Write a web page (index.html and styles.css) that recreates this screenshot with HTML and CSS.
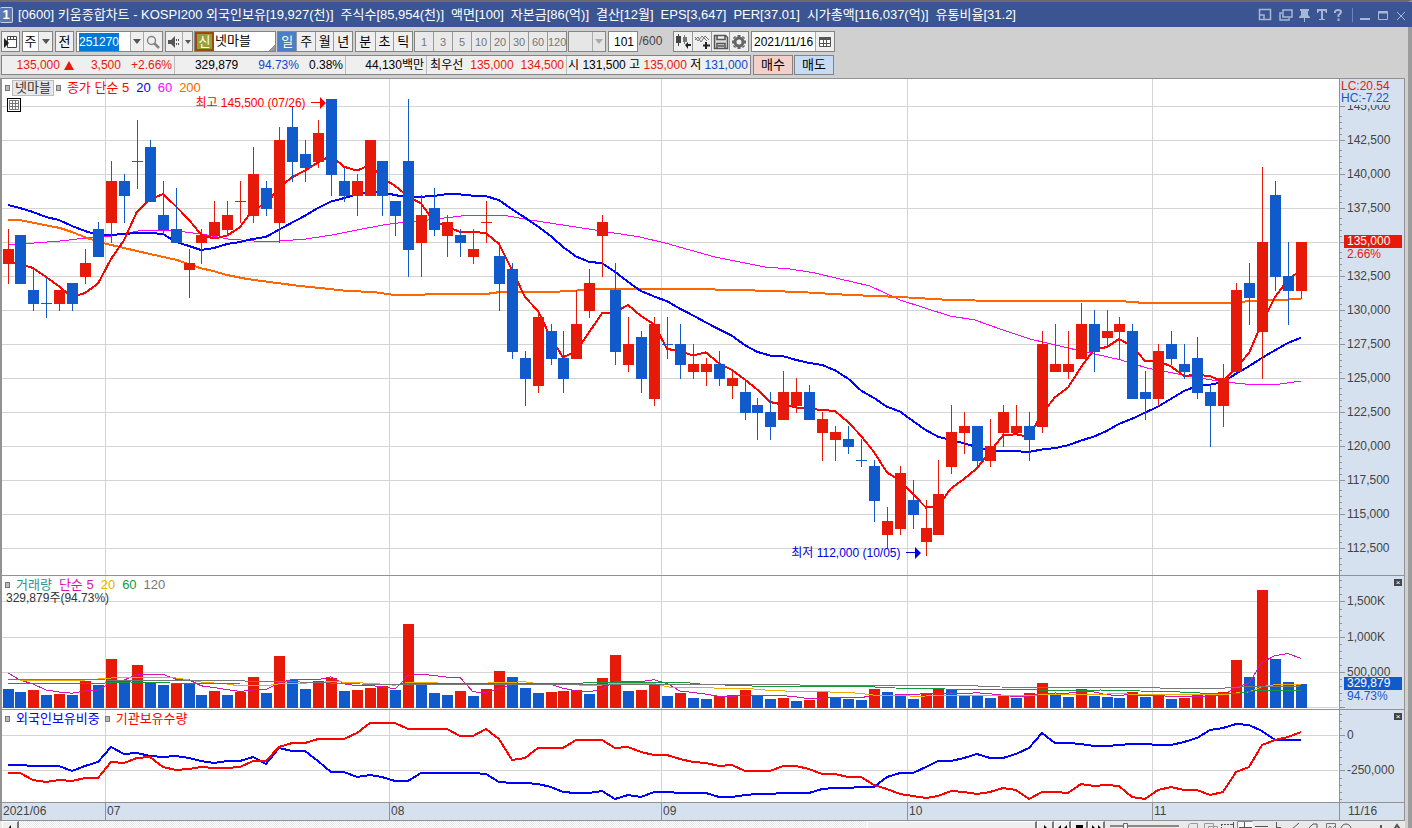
FILE: index.html
```html
<!DOCTYPE html>
<html lang="ko">
<head>
<meta charset="utf-8">
<title>[0600] 키움종합차트</title>
<link rel="stylesheet" href="styles.css">
</head>
<body>
<div class="window">
  <header class="titlebar">
    <span class="win-no">1</span>
    <h1 class="title">
      <span>[0600] 키움종합차트 - KOSPI200 외국인보유[19,927(천)]</span>
      <span>주식수[85,954(천)]</span>
      <span>액면[100]</span>
      <span>자본금[86(억)]</span>
      <span>결산[12월]</span>
      <span>EPS[3,647]</span>
      <span>PER[37.01]</span>
      <span>시가총액[116,037(억)]</span>
      <span>유통비율[31.2]</span>
    </h1>
    <svg class="win-icons" width="150" height="22" viewBox="1257 3 150 22" fill="none" stroke="#a9b7d6">
      <path stroke-width="1.5" d="M1258.5 8.500h11v10h-11zM1258 14h5v5M1282 9h9v7h-9z"/>
      <path stroke-width="1.500" d="M1281 12h-2v7h9v-2"/>
      <path fill="#a9b7d6" stroke="none" d="M1299 8h9v2h-1v4l2 2v1h-5v4h-1v-4h-5v-1l2-2v-4h-1zM1316 8h10v4h-1l-1-2h-2v8h2v1h-6v-1h2v-8h-2l-1 2h-1z"/>
      <path stroke-width="2" d="M1334 12V10.500Q1335 9 1337 9Q1340 9 1340 11Q1340 12.500 1337.500 14V16M1337.500 17.500V20"/>
      <path stroke="#6f86b6" d="M1351.500 7v14"/>
      <path stroke-width="2" d="M1359 18h10M1377 11.500h10"/>
      <path d="M1377.500 10.500h9v8h-9zM1396 11l8 8M1404 11l-8 8"/>
    </svg>
  </header>

  <div class="toolbar">
    <button class="btn" aria-label="종목 목록"><svg width="14" height="14"><path fill="#fff" stroke="#444" d="M3.500 1.500h9v11h-9zM6.500 1.500v3M9.500 1.500v3M3.500 4.500h9"/><path fill="#222" d="M0 3l5 5-5 5z"/></svg></button>
    <span class="combo combo-kind"><button class="face">주</button><button class="arrow" aria-label="구분 선택"></button></span>
    <button class="btn">전</button>
    <span class="combo combo-code"><input value="251270" aria-label="종목코드" class="code"><button class="arrow" aria-label="최근 종목"></button><button class="face icon" aria-label="종목 검색"><svg width="14" height="14" fill="none" stroke="#858585"><circle cx="5.500" cy="5.500" r="4" stroke-width="1.500"/><path stroke-width="2.500" d="M8 8l5 5"/></svg></button></span>
    <span class="combo combo-sound"><button class="face icon" aria-label="소리"><svg width="14" height="14"><path fill="#555" d="M1 5h3l4-4v12l-4-4h-3zM9 4h1v2h-1zM9 8h1v2h-1zM11 4h1v2h-1zM11 8h1v2h-1z"/></svg></button><button class="arrow" aria-label="소리 설정"></button></span>
    <span class="stock"><b class="credit">신</b><span>넷마블</span></span>
    <span class="group periods"><button class="on">일</button><button>주</button><button>월</button><button>년</button></span>
    <span class="group units"><button>분</button><button>초</button><button>틱</button></span>
    <span class="group counts"><button disabled>1</button><button disabled>3</button><button disabled>5</button><button disabled>10</button><button disabled>20</button><button disabled>30</button><button disabled>60</button><button disabled>120</button></span>
    <span class="combo combo-off"><button class="face" disabled aria-label="주기"></button><button class="arrow" disabled aria-label="주기 선택"></button></span>
    <label class="bars"><input value="101" aria-label="표시 개수"><span>/600</span></label>
    <span class="group tools">
      <button aria-label="차트 유형"><svg width="16" height="16"><path fill="#444" d="M1 2h5v7h-5zM3 0h1v12h-1z"/><path fill="#777" d="M8 3h4v5h-4zM9 1h1v9h-1z"/><path fill="#222" d="M10 11l3-3v2h3v2h-3v3z"/></svg></button>
      <button aria-label="지표 추가"><svg width="16" height="16"><path fill="none" stroke="#777" d="M1 6l3-3 3 5 4-6 4 4M1 3l3 4 4-5 5 5"/><path stroke="#222" stroke-width="2" d="M12 8v7M9 11.500h7"/></svg></button>
      <button aria-label="저장"><svg width="16" height="16"><path fill="#ddd" stroke="#555" stroke-width="1.500" d="M1.500 1.500h11l2 2v11h-13zM4 1.500v4h8v-4M4 14.500v-5h8v5M5 12h6"/></svg></button>
      <button aria-label="설정"><svg width="16" height="16"><circle cx="8" cy="8" r="4" fill="none" stroke="#666" stroke-width="3"/><path stroke="#666" stroke-width="3" d="M8 1v2M8 13v2M1 8h2M13 8h2M3 3l1 1M12 12l1 1M3 13l1-1M12 4l1-1"/><circle cx="8" cy="8" r="2" fill="#eee"/></svg></button>
    </span>
    <span class="combo combo-date"><input value="2021/11/16" aria-label="기준일"><button class="face icon" aria-label="달력"><svg width="12" height="12"><path fill="#fff" stroke="#555" d="M.5 1.500h11v9h-11zM.5 7.500h11M4.500 4v6M7.500 4v6"/><path fill="#555" d="M0 1h12v3h-12z"/></svg></button></span>
  </div>

  <div class="quote">
    <div class="cells">
      <div class="cell c1 up"><span>135,000</span><i class="tri"></i><span>3,500</span><span>+2.66%</span></div>
      <div class="cell c2"><span>329,879</span><span class="down">94.73%</span><span>0.38%</span></div>
      <div class="cell c3"><span>44,130백만</span></div>
      <div class="cell c4"><span>최우선</span><span class="up">135,000</span><span class="up">134,500</span></div>
      <div class="cell c5"><span>시</span><span>131,500</span><span>고</span><span class="up">135,000</span><span>저</span><span class="down">131,000</span></div>
    </div>
    <button class="trade buy">매수</button>
    <button class="trade sell">매도</button>
  </div>

  <main class="chart">
    <section class="pane price">
      <div class="plot">
        <svg id="price-plot" class="canvas" viewBox="2 79 1337 496" preserveAspectRatio="none"></svg>
        <div class="legend">
          <i class="mark"></i><span class="tag">넷마블</span><i class="mark"></i>
          <span class="l-red">종가 단순 5</span><span class="l-blue">20</span><span class="l-pink">60</span><span class="l-orange">200</span>
        </div>
        <button class="grid-btn" aria-label="데이터 표"><svg width="10" height="10"><path fill="#fff" stroke="#777" d="M.5.5h9v9h-9zM.5 3.500h9M.5 6.500h9M3.500.5v9M6.500.5v9"/></svg></button>
        <div class="note high"><span>최고 145,500 (07/26)</span><svg width="15" height="12"><path fill="currentColor" d="M0 5h9V0l6 6-6 6V6H0z"/></svg></div>
        <div class="note low"><span>최저 112,000 (10/05)</span><svg width="15" height="12"><path fill="currentColor" d="M0 5h9V0l6 6-6 6V6H0z"/></svg></div>
      </div>
      <div class="axis">
        <svg id="price-axis" width="65" height="496" viewBox="1339 79 65 496"></svg>
        <div class="rates"><span class="up">LC:20.54</span><span class="hc">HC:-7.22</span></div>
        <div class="now now-price"><b>135,000</b><span>2.66%</span></div>
      </div>
    </section>
    <section class="pane volume">
      <div class="plot">
        <svg id="volume-plot" class="canvas" viewBox="2 576 1337 133" preserveAspectRatio="none"></svg>
        <div class="legend">
          <i class="mark"></i><span class="l-teal">거래량</span><span class="l-magenta">단순 5</span><span class="l-gold">20</span><span class="l-green">60</span><span class="l-gray">120</span>
        </div>
        <div class="vol-now">329,879주(94.73%)</div>
      </div>
      <div class="axis">
        <svg id="volume-axis" width="65" height="133" viewBox="1339 576 65 133"></svg>
        <button class="close" aria-label="거래량 닫기"></button>
        <div class="now now-volume"><b>329,879</b><span>94.73%</span></div>
      </div>
    </section>
    <section class="pane holding">
      <div class="plot">
        <svg id="holding-plot" class="canvas" viewBox="2 710 1337 92" preserveAspectRatio="none"></svg>
        <div class="legend"><i class="mark"></i><span class="l-blue">외국인보유비중</span><i class="mark"></i><span class="l-red">기관보유수량</span></div>
      </div>
      <div class="axis">
        <svg id="holding-axis" width="65" height="92" viewBox="1339 710 65 92"></svg>
        <button class="close" aria-label="보유 닫기"></button>
      </div>
    </section>
    <div class="dates">
      <div class="months"><span>2021/06</span><span>07</span><span>08</span><span>09</span><span>10</span><span>11</span></div>
      <div class="today">11/16</div>
    </div>
  </main>

  <footer class="bottom">
    <button class="sb left" aria-label="왼쪽으로"><svg width="14" height="14"><path d="M8 2v10L4 7z"/></svg></button>
    <div class="track"><div class="thumb"></div></div>
    <button class="sb" aria-label="오른쪽으로"><svg width="14" height="14"><path d="M6 2v10l5-5z"/></svg></button>
    <button class="sb" aria-label="처음"><svg width="14" height="14"><path d="M6 2v8L2 6zM12 2v8L8 6z"/></svg></button>
    <button class="sb" aria-label="정지"><svg width="14" height="14"><path d="M4 2h7v7H4z"/></svg></button>
    <button class="sb" aria-label="끝"><svg width="14" height="14"><path d="M3 2v8l4-4zM9 2v8l4-4z"/></svg></button>
    <svg class="draw-tools" width="300" height="20" viewBox="1104 821 300 20" fill="none" stroke="#555">
      <path stroke="#888" stroke-width="2" d="M1109 826h69"/><path fill="#eee" stroke="#666" d="M1122.500 823.500h4v10h-4z"/>
      <path stroke="#999" d="M1187.500 835v-10l2-1.500h7v11M1203.500 823.500h9v8h-9zM1207.500 826.500h9v8h-9z"/>
      <path stroke-dasharray="2 1" d="M1220 824.500h10M1220.500 824v10"/><path d="M1232.500 822v8M1229 824.500h4"/>
      <path fill="#f8f8f8" stroke="none" d="M1236 821h16v12h-16z"/><path stroke="#888" d="M1236.500 833v-11.500h15"/>
      <path d="M1238 827.500h13M1243.500 822v10M1254 826.500h13M1259 829.500h8M1275.500 822v10M1275 827.500h5M1290 830l8-7M1306 830l6-6h4v5"/>
      <path stroke="#777" d="M1325.500 823.500h9v9h-9zM1326 830l3-4 2 3 3-3"/><circle cx="1345" cy="829" r="5"/><path stroke-width="2" d="M1380 825v8M1392 831l4-6 4 6"/>
    </svg>
  </footer>
</div>
<script src="chart.js"></script>
</body>
</html>
```
FILE: styles.css
```css
* { box-sizing: border-box; }
body {
  margin: 0;
  height: 100vh;
  overflow: hidden;
  background: #d0d0d0;
  color: #000;
  font: 13px/18px "Liberation Sans", "Noto Sans CJK KR", sans-serif;
}
button, input {
  font: inherit;
  color: inherit;
  margin: 0;
  padding: 0;
  border: 0;
  border-radius: 0;
  min-width: 0;
}
input { font-size: 12px; outline: 0; }
svg { display: block; flex: none; }
.window { border-top: 2px solid #6c6c6c; border-right: 4px solid #9c9c9c; }

.titlebar {
  display: flex;
  align-items: center;
  height: 25px;
  margin-right: -4px;
  padding-right: 4px;
  background: #3a5592;
  color: #fff;
}
.win-no {
  width: 13px;
  height: 16px;
  border: 1px solid #c8d2e8;
  border-left: 0;
  border-radius: 2px;
  background: #5c77b4;
  font-weight: bold;
  line-height: 14px;
  text-align: center;
}
.title {
  flex: 1;
  display: flex;
  gap: 7px;
  margin: 0 0 0 5px;
  font-size: 13px;
  font-weight: normal;
  white-space: nowrap;
}

.toolbar {
  display: flex;
  gap: 2px;
  height: 26px;
  margin-top: 4px;
  padding-left: 1px;
  white-space: nowrap;
}
.toolbar > * { height: 21px; flex: none; }
.btn, .combo, .group, .stock {
  border: 1px solid #848484;
  background: #efefef;
}
.btn { width: 19px; display: flex; align-items: center; justify-content: center; }
.combo, .group, .stock, .bars { display: flex; align-items: stretch; }
.face { flex: 1; background: #fff; }
.icon { flex: none; width: 19px; display: flex; align-items: center; justify-content: center; background: #efefef; border-left: 1px solid #aaa; }
.arrow { width: 13px; background: #efefef; border-left: 1px solid #aaa; display: flex; align-items: center; justify-content: center; }
.arrow::after { content: ""; border: 4px solid transparent; border-top: 5px solid #555; border-bottom: 0; }
.combo-kind { width: 31px; }
.combo-kind .arrow { width: 14px; }
.combo-code { width: 87px; }
.combo-code .code { flex: 1; width: 20px; padding-left: 2px; }
.code::selection { background: #0078d7; color: #fff; }
.combo-sound { width: 28px; }
.combo-sound .icon { flex: 1; border-left: 0; }
.combo-sound .arrow { width: 10px; }
.combo-sound .arrow::after { border-width: 4px 3px 0; }
.stock { width: 82px; margin-left: -1px; background: linear-gradient(135deg, #fff 93%, #999 93%); }
.credit { width: 19px; margin-right: 1px; border: 2px solid #9a4a0c; background: #95a03c; color: #fff; font-weight: normal; text-align: center; line-height: 15px; }
.group button { width: 19px; background: #efefef; border-left: 1px solid #999; }
.group button:first-child { border-left: 0; }
.periods { margin-left: -1px; width: 76px; }
.group .on { background: #4a7fc8; color: #fff; }
.units { width: 58px; }
.counts { width: 153px; margin-left: -1px; }
.counts button { flex: 1; font-size: 11px; }
.counts button:disabled { color: #777; background: #e9e9e9; }
.combo-off { width: 38px; margin-left: -1px; }
.combo-off button { background: #e6e6e6; }
.combo-off .arrow::after { border-top-color: #aaa; }
.bars input { width: 30px; padding-right: 3px; border: 1px solid #848484; background: #fff; text-align: right; }
.bars span { width: 33px; padding-left: 1px; color: #444; font-size: 12px; line-height: 20px; }
.tools { width: 76px; }
.tools button { display: flex; align-items: center; justify-content: center; }
.combo-date { width: 84px; }
.combo-date input { flex: 1; width: 40px; padding-left: 2px; }

.quote { display: flex; gap: 2px; height: 20px; margin-top: -2px; padding-left: 1px; }
.cells { display: flex; border: 1px solid #848484; background: #efefef; font-size: 12px; }
.cell { display: flex; justify-content: flex-end; align-items: center; padding-right: 2px; border-left: 1px solid #bbb; white-space: nowrap; }
.cell:first-child { border-left: 0; }
.c1 { width: 172px; gap: 10px; }
.c2 { width: 171px; gap: 10px; }
.c2 span:first-child { margin-right: 10px; }
.c3 { width: 81px; }
.c4 { width: 140px; gap: 7px; }
.c5 { width: 184px; justify-content: space-between; padding-left: 1px; }
.tri { margin: 0 7px 0 -6px; border: 5px solid transparent; border-top: 0; border-bottom: 9px solid #e71a0a; }
.up { color: #e71a0a; }
.down { color: #1446c8; }
.trade { width: 40px; border: 1px solid #848484; }
.buy { background: #f4d0ca; }
.sell { background: #c5dcf4; margin-left: -1px; }

.chart { margin-top: 3px; margin-right: 3px; border: 1px solid #929292; border-left-width: 2px; background: #fff; font-size: 12px; }
.pane { display: flex; border-bottom: 1px solid #929292; }
.plot { flex: 1; min-width: 0; position: relative; }
.canvas { width: 100%; shape-rendering: crispEdges; }
.price .canvas { height: 496px; }
.volume .canvas { height: 133px; }
.holding .canvas { height: 92px; }
.axis { position: relative; width: 65px; background: #d6e1ef; border-left: 1px solid #929292; }
.axis svg { margin-left: -1px; shape-rendering: crispEdges; }
.axis text { fill: #444; font-size: 12px; }
.legend { position: absolute; top: 0; left: 3px; display: flex; align-items: center; gap: 7px; font-size: 13px; white-space: nowrap; }
.legend .mark { width: 5px; height: 6px; margin-right: -1px; border: 1px solid #777; background: #bbb; }
.legend .tag { margin-left: -4px; }
.legend .tag + .mark { margin-left: -5px; }
.tag { padding: 0 2px; border: 1px solid #bbb; background: #e8e8e8; line-height: 14px; color: #333; }
.l-red { color: #f00; }
.l-blue { color: #00f; }
.l-pink { color: #f0f; }
.l-orange { color: #f60; }
.l-teal { color: #339090; }
.l-magenta { color: #d614b4; }
.l-gold { color: #eaae00; }
.l-green { color: #149a3c; }
.l-gray { color: #777; }
.holding .mark + .l-blue + .mark { margin-left: -2px; }
.grid-btn { position: absolute; top: 19px; left: 5px; width: 14px; height: 14px; padding: 1px; border: 1px solid #000; background: #fff; }
.note { position: absolute; display: flex; align-items: center; gap: 5px; white-space: nowrap; }
.high { right: 75.8%; top: 15px; color: #f00; }
.low { right: 31.3%; top: 465px; color: #00d; }
.rates { position: absolute; top: 1px; left: 0; right: 0; height: 25px; display: flex; flex-direction: column; padding-left: 1px; background: #d6e1ef; line-height: 12px; }
.hc { color: #115acb; }
.now { position: absolute; left: 4px; right: 2px; display: flex; flex-direction: column; line-height: 12px; }
.now b { padding-left: 3px; height: 13px; color: #fff; font-weight: normal; }
.now span { padding-left: 3px; }
.now-price { top: 156px; color: #e71a0a; }
.now-price b { background: #e71a0a; }
.now-volume { top: 101px; color: #115acb; }
.now-volume b { background: #115acb; }
.vol-now { position: absolute; top: 13px; left: 4px; color: #333; }
.close { position: absolute; top: 3px; right: 2px; width: 8px; height: 7px; background: #444; }
.close::after { content: "×"; display: block; color: #fff; font-size: 8px; line-height: 7px; text-align: center; }
.dates { display: flex; height: 17px; background: #d6e1ef; color: #444; line-height: 16px; }
.months { flex: 1; display: grid; grid-template-columns: 103fr 284fr 272fr 246fr 245fr 187fr; }
.months span { padding-left: 1px; border-left: 1px solid #929292; }
.months span:first-child { border-left: 0; }
.today { width: 65px; padding-left: 8px; border-left: 1px solid #929292; }

.bottom { display: flex; padding-left: 2px; margin-right: 3px; background: #e9e9e9; }
.sb { width: 17px; height: 18px; border: 1px solid #fff; border-right: 2px solid #777; border-bottom: 2px solid #777; background: #efefef; }
.track { flex: 1; display: flex; justify-content: flex-end; background: repeating-conic-gradient(#fff 0 25%, #e6e6e6 0 50%) 0 0 / 2px 2px; }
.thumb { width: 170px; border: 1px solid #fff; border-right: 2px solid #777; background: #efefef; }
```
FILE: chart.js
```js
const STEP = 12.93, FIRST = 8;
const UP = '#e71a0a', DOWN = '#115acb';
const cx = i => Math.floor(FIRST + STEP * i);

/* colour, high, body top, body bottom, low */
const candles = `R229,249,264,284 B235,235,284,284 B268,290,304,311 B277,303,304,318 R290,290,304,311 B283,283,304,311
R249,263,277,284 B222,229,257,257 R161,181,223,243 B174,181,196,223 R120,161,162,189 B140,147,202,202
B181,215,230,234 B188,229,243,243 R249,263,270,298 R229,235,243,264 R201,222,236,236 R201,215,230,236
R181,201,202,223 R147,174,216,223 B181,188,209,216 R127,140,223,243 B107,127,162,182 B140,154,168,182
R120,133,162,168 B99,99,175,196 B167,181,196,202 R174,181,196,216 R140,140,196,196 B161,161,196,216
B201,201,216,236 B99,161,250,277 R195,215,243,277 B188,208,230,236 R215,222,236,257 B229,235,243,257
R229,249,257,264 R201,222,223,243 B242,256,284,311 B263,269,352,359 B351,358,379,406 R312,317,386,393
B324,331,359,365 B331,358,379,393 R290,324,359,359 R269,283,311,318 R215,222,236,277 B263,290,352,365
R317,344,365,372 B331,337,379,393 R317,324,399,406 B317,344,345,359 B324,344,365,379 R344,364,372,379
R358,364,372,386 B351,364,379,386 R370,378,386,399 B379,392,413,420 B398,405,413,440 B392,412,427,440
R371,392,420,420 R378,392,406,413 B385,392,420,420 R412,419,433,461 R426,432,440,461 B426,439,447,454
B439,460,461,467 B460,466,501,522 R507,521,535,548 R466,473,529,535 B480,500,515,529 R500,528,542,556
R460,494,535,535 R405,432,467,474 R412,426,433,454 B426,426,461,467 R419,446,461,467 R405,412,433,447
R405,426,433,433 B412,426,440,461 R331,344,427,433 R324,364,372,372 R331,364,372,379 R303,324,359,359
B310,324,352,372 R310,331,338,345 R317,324,332,359 B324,331,399,399 B371,392,399,420 R344,351,399,406
B331,344,359,365 B344,364,372,379 B337,358,393,399 B385,392,406,447 R364,378,406,427 R283,290,372,372
B263,283,298,325 R167,242,332,379 B181,195,277,291 B242,276,291,325 R242,242,291,299`
  .split(/\s+/).map(s => [s[0], ...s.slice(1).split(',').map(Number)]);

const volumes = [689,692,690,695,694,695,681,685,659,681,665,682,685,683,684,695,691,695,692,677,693,656,680,689,681,678,691,690,688,686,690,624,
684,693,695,691,696,689,671,677,688,693,692,691,690,694,678,655,691,690,685,696,693,698,699,696,695,690,696,699,698,701,700,692,697,699,700,689,
692,694,699,693,689,690,696,696,698,696,698,693,683,695,697,689,696,697,698,692,697,695,699,698,694,693,692,660,677,590,659,682,684];

const foreign = [765,765,766,766,766,771,766,762,747,754,753,756,757,756,758,761,763,761,761,757,764,748,751,751,761,772,772,777,775,777,781,781,
773,773,773,773,773,774,782,783,783,784,787,792,793,793,791,799,795,797,792,792,793,793,793,797,797,795,794,794,793,793,793,789,788,788,787,787,
777,773,773,767,761,761,758,754,758,758,754,748,733,743,743,744,746,746,745,744,744,745,745,742,738,730,728,724,725,731,740,740,740];
const institution = [773,773,780,782,780,781,778,778,762,763,758,757,767,770,769,767,768,768,767,761,761,747,743,743,739,739,739,733,723,723,723,729,
729,729,729,736,736,729,739,760,758,748,748,748,740,740,740,748,747,752,755,755,759,762,763,766,765,771,771,771,766,766,769,774,774,777,777,785,
789,794,796,798,796,791,792,794,792,788,790,799,792,792,793,784,786,785,786,797,799,790,787,790,790,795,792,772,767,745,740,737,732];

const line = (pts, color, w) =>
  `<polyline fill="none" stroke="${color}" stroke-width="${w}" points="${pts.map(p => p.join(',')).join(' ')}"/>`;
const series = ys => ys.map((y, i) => [cx(i), y]);
const rect = (x, y, w, h, c) => `<rect x="${x}" y="${y}" width="${w}" height="${h}" fill="${c}"/>`;
/* moving average; `seed` holds the values that precede a full window */
const average = (v, n, seed) => v.map((_, i) =>
  i < seed.length ? seed[i] : v.slice(i - n + 1, i + 1).reduce((a, b) => a + b, 0) / n);
const pairs = s => s.split(' ').map(p => p.split(',').map(Number));

const MONTHS = [105, 389, 661, 907, 1152];
const grid = (rows, top, h) =>
  rows.map(y => rect(2, y, 1336, 1, '#d4d4d4')).join('') + MONTHS.map(x => rect(x, top, 1, h, '#d4d4d4')).join('');
const put = (id, html) => { document.getElementById(id).innerHTML = html; };

const priceRows = Array.from({ length: 14 }, (_, k) => 106 + 34 * k);
const closes = candles.map(c => c[0] === 'R' ? c[2] : c[3]);
const ma5 = average(closes, 5, [262, 264, 268, 277]);
const ma20 = average(closes, 20, [205,208,212,217,220,226,231,235,235,234,233,233,234,242,246,250,248,244,242]);
const ma60 = pairs('8,245 34,243 60,241 86,238 112,236 138,231 152,230 176,231 202,234 228,239 254,241 280,241 306,239 332,235 357,230 383,225 405,222 420,221 444,218 470,215 503,215 530,220 556,224 582,228 608,232 640,237 665,243 690,250 715,257 740,262 765,267 790,269 815,273 840,279 870,286 900,300 925,308 950,316 975,320 1000,329 1030,339 1068,348 1095,354 1121,360 1147,368 1173,373 1199,378 1225,382 1245,384 1280,384 1301,381');
const ma200 = pairs('8,220 20,220 34,223 60,228 72,232 87,238 103,243 124,248 150,254 177,260 200,268 213,271 227,275 247,279 277,283 300,286 320,288 348,291 373,292 395,295 420,295 430,294 486,294 500,292 552,292 603,289 690,289 740,290 800,292 850,295 900,297 950,300 1000,301 1119,301 1145,303 1230,303 1250,301 1275,300 1301,299');

put('price-plot', grid(priceRows, 79, 496)
  + line(ma60, '#f0f', 1) + line(ma200, '#f60', 2) + line(series(ma20), '#00f', 2) + line(series(ma5), '#f00', 2)
  + candles.map(([k, hi, top, bot, lo], i) => {
    const c = k === 'R' ? UP : DOWN;
    return rect(cx(i), hi, 1, lo - hi, c) + rect(cx(i) - 5, top, 11, bot - top, c);
  }).join(''));

put('volume-plot', grid([601, 637, 672, 707], 576, 133)
  + volumes.map((y, i) => rect(cx(i) - 5, y, 11, 708 - y, i && y < volumes[i - 1] ? UP : DOWN)).join('')
  + line(series(average(volumes, 5, [673, 680, 684, 690])), '#d614b4', 1)
  + line(series(average(volumes, 20, [679,680,680,680,680,681,680,679,678,677,677,677,677,678,680,682,683,684,686])), '#eaae00', 1)
  + line(pairs('8,683 105,683 130,682 170,683 240,684 400,684 410,683 583,683 600,682 680,682 700,684 725,685 752,686 855,686 895,688 945,689 1040,690 1085,691 1100,690 1180,692 1200,693 1240,693 1260,690 1301,690'), '#149a3c', 1)
  + line(pairs('8,679 50,679 105,680 245,681 300,682 360,684 500,685 620,684 775,684 800,685 955,685 1000,687 1160,688 1225,688 1240,687 1301,686'), '#777', 1));

put('holding-plot', grid([735, 770], 710, 92) + line(series(foreign), '#00f', 2) + line(series(institution), '#f00', 2));

const ticks = (ys, w) => ys.map(y => rect(1340, y, w, 1, '#929292')).join('');
const label = (y, t) => `<text x="1347" y="${y + 5}">${t}</text>`;
const money = n => n.toLocaleString('en-US');
/* the row of the current price is labelled by its badge */
put('price-axis', ticks(priceRows, 5) + ticks(priceRows.flatMap(y => [10, 16, 22, 28].map(d => y + d)), 2)
  + priceRows.map((y, k) => k === 4 ? '' : label(y - 1, money(145000 - 2500 * k))).join(''));
put('volume-axis', ticks([601, 637, 672, 707], 5)
  + ticks([580, 587, 594, 609, 616, 623, 630, 644, 651, 658, 665, 679, 686, 693, 700], 2)
  + label(600, '1,500K') + label(636, '1,000K') + label(671, '500,000'));
put('holding-axis', ticks([735, 770], 5) + ticks([714, 721, 728, 742, 750, 757, 764, 778, 785, 792, 799], 2)
  + label(734, '0') + label(769, '-250,000'));

const code = document.querySelector('.code');
code.focus();
code.select();
```
